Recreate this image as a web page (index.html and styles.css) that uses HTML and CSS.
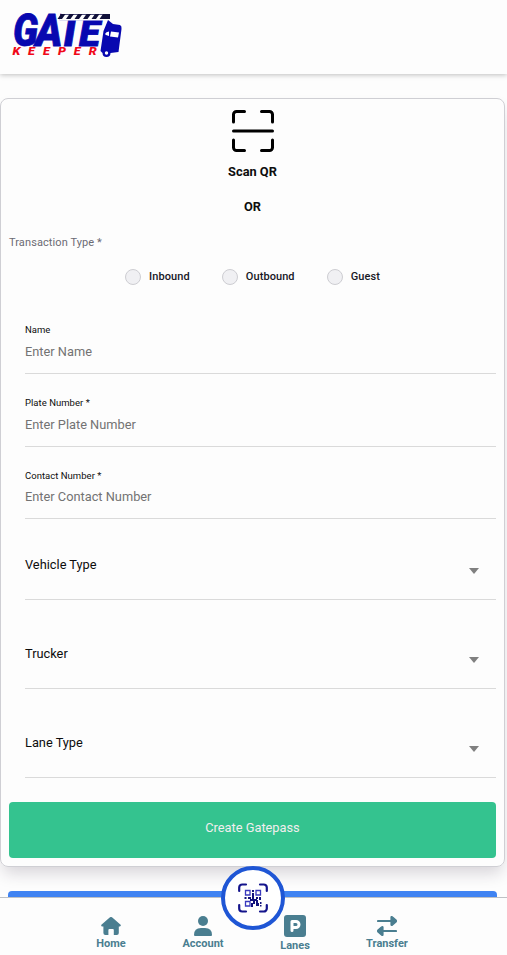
FILE: index.html
```html
<!DOCTYPE html>
<html lang="en">
<head>
<meta charset="utf-8">
<title>Gate Keeper</title>
<link rel="stylesheet" href="styles.css">
</head>
<body>
<header class="header">
  <svg class="logo" width="112" height="48" viewBox="12 11 112 48" role="img" aria-label="Gate Keeper">
    <g class="logo-gate">
      <text x="13" y="46" font-size="45" textLength="25" lengthAdjust="spacingAndGlyphs">G</text>
      <text x="35.500" y="46" font-size="45" textLength="27" lengthAdjust="spacingAndGlyphs">A</text>
      <text x="57" y="46" font-size="45" textLength="26" lengthAdjust="spacingAndGlyphs">T</text>
      <text x="79" y="46" font-size="36" textLength="21" lengthAdjust="spacingAndGlyphs">E</text>
    </g>
    <path fill="#fdfdfd" d="M62 11h50v9.500H59z"/>
    <path fill="#161650" d="M60 14h50v.8H60z"/>
    <path fill="#10103a" d="M61 14h4.500l-3.500 5h-4.500zM69.500 14h4.500l-3.500 5h-4.500zM78 14h4.500l-3.500 5h-4.500zM86.500 14h4.500l-3.500 5h-4.500zM95 14h4.500l-3.500 5h-4.500zM103 14h7v5h-10.500z"/>
    <path fill="#0808b0" d="M108 20l5 4 7 1q2 1 1.500 4l-3 23-8 1a4 4 0 0 1-8 0l-2-2 3-20z"/>
    <path fill="#fff" d="M105 34q1-2.500 4-2.500v4.500l-3-1zM111 31.500l8 1-1 5-8-1z"/>
    <circle cx="106.500" cy="53" r="1.700" fill="#fff"/>
    <g class="logo-keeper" transform="translate(12.500 55) scale(1.200 1)">
      <text x="0 13 25.500 38 51 63.500">KEEPER</text>
    </g>
  </svg>
</header>
<main>
  <section class="card">
    <div class="scan">
      <svg width="42" height="42" viewBox="0 0 42 42" fill="none" stroke="#000" stroke-width="3" stroke-linecap="round" stroke-linejoin="round"><path d="M1.500 12V4.500a3 3 0 0 1 3-3H12.500M29.500 1.500h8a3 3 0 0 1 3 3V12M40.500 30v7.500a3 3 0 0 1-3 3h-8M12.500 40.500h-8a3 3 0 0 1-3-3V30M1.500 21h39"/></svg>
      <strong>Scan QR</strong>
      <strong class="or">OR</strong>
    </div>
    <div class="type-label">Transaction Type *</div>
    <div class="radios">
      <label><input type="radio" name="type">Inbound</label>
      <label><input type="radio" name="type">Outbound</label>
      <label><input type="radio" name="type">Guest</label>
    </div>
    <div class="fields">
      <label class="field"><span>Name</span><input type="text" placeholder="Enter Name"></label>
      <label class="field"><span>Plate Number *</span><input type="text" placeholder="Enter Plate Number"></label>
      <label class="field contact"><span>Contact Number *</span><input type="text" placeholder="Enter Contact Number"></label>
      <div class="select"><span>Vehicle Type</span><i class="arrow"></i></div>
      <div class="select"><span>Trucker</span><i class="arrow"></i></div>
      <div class="select"><span>Lane Type</span><i class="arrow"></i></div>
    </div>
    <button class="create">Create Gatepass</button>
  </section>
  <div class="next-button"></div>
</main>
<nav class="nav">
  <a class="home"><svg width="20" height="18" viewBox="0 0 20 18"><path fill="currentColor" d="M8.700.5a2 2 0 0 1 2.600 0l8.300 7.200q.8 1.500-.8 1.800h-1V16q0 2-2 2h-3v-5q0-1-1-1H8.400q-1 0-1 1v5h-3q-2 0-2-2V9.500h-1Q-.4 9.200.4 7.700z"/></svg>Home</a>
  <a class="account"><svg width="18" height="20" viewBox="0 0 18 20" fill="currentColor"><circle cx="9" cy="5" r="5"/><path d="M0 19q0-7 7-7h4q7 0 7 7 0 1-1 1H1q-1 0-1-1z"/></svg>Account</a>
  <a class="lanes"><svg width="22" height="22" viewBox="0 0 22 22"><rect width="22" height="22" rx="3" fill="currentColor"/><path fill="none" stroke="#fff" stroke-width="3" stroke-linejoin="round" stroke-linecap="round" d="M8 15.500V6.500h4a3 3 0 0 1 0 6H8"/></svg>Lanes</a>
  <a class="transfer"><svg width="20" height="20" viewBox="0 0 20 20"><path fill="none" stroke="currentColor" stroke-width="2.200" stroke-linecap="round" d="M1 5h14M5 15h14"/><path fill="currentColor" stroke="currentColor" stroke-width="1.200" stroke-linejoin="round" d="M14 1q.5-1 1.500 0l3.500 3q1 1 0 2l-3.500 3q-1 1-1.500 0zM6 11q-.5-1-1.500 0L1 14q-1 1 0 2l3.500 3q1 1 1.500 0z"/></svg>Transfer</a>
  <a class="qr" aria-label="Scan"><svg width="30" height="30" viewBox="0 0 30 30"><path fill="none" stroke="#15158c" stroke-width="2.200" stroke-linecap="round" d="M1.200 8V4.500a3 3 0 0 1 3-3H8M22 1.500h3.800a3 3 0 0 1 3 3V8M28.800 22v3.500a3 3 0 0 1-3 3H22M8 28.500H4.200a3 3 0 0 1-3-3V22"/><path fill="none" stroke="#3939bd" stroke-width="1.300" d="M7.500 7.500h4.500v4.500H7.500zM18 7.500h4.500v4.500H18zM7.500 18.500h4.500V23H7.500z"/><path fill="#12127c" d="M14 7h2v2h-2zM14 10h2v3h-2zM6.500 14h2v2h-2zM10 14h3v2h-3zM14 13h2v3h3v2h-2v3h-2v3h-2v-4h2v-2h-3v-2h2zM18 14h2v2h-2zM21 14h2v3h-3v3h-2v-3h3zM18 20h3v3h-3zM22 19h1.500v2H22zM22 22h1.500v1.500H22z"/></svg></a>
</nav>
</body>
</html>
```
FILE: styles.css
```css
* { box-sizing: border-box; }
body {
  margin: 0;
  height: 955px;
  overflow: hidden;
  background: #fdfdfd;
  color: #0d0d0d;
  font: 12.8px/20px Roboto, "Liberation Sans", sans-serif;
}
.header {
  height: 74px;
  padding: 11px 12px;
  box-shadow: 0 1px 5px rgba(0, 0, 0, .25);
}
.logo { display: block; overflow: visible; }
.logo-gate { fill: #0808b0; stroke: #0808b0; stroke-width: .8; font-family: Roboto, sans-serif; font-weight: 900; font-style: italic; }
.logo-keeper { fill: #f00818; font: italic 900 10.5px Roboto, sans-serif; }
main { padding-top: 24px; }
.card {
  width: 505px;
  height: 769px;
  padding: 11px 8px 8px;
  border: 1px solid #cfcfd4;
  border-radius: 8px;
  box-shadow: 0 9px 16px -3px rgba(40, 20, 50, .18);
}
.scan { display: flex; flex-direction: column; align-items: center; }
.scan strong { margin-top: 10px; font-weight: 700; line-height: 20px; }
.scan .or { margin-top: 15px; }
.type-label { margin-top: 15px; color: #6b6b74; font-size: 11px; line-height: 21px; letter-spacing: .1px; }
.radios { display: flex; justify-content: center; gap: 32px; margin-top: 14px; }
.radios label { display: flex; align-items: center; gap: 8px; height: 20px; font-size: 11px; font-weight: 500; color: #171725; letter-spacing: .08px; }
.radios input { appearance: none; width: 16px; height: 16px; margin: 0 0 1px; border: 1px solid #cdcdd2; border-radius: 50%; background: #f0f0f3; }
.fields { padding-left: 16px; margin-top: 36px; }
.field { display: block; height: 51px; margin-bottom: 22px; border-bottom: 1px solid #dadada; }
.field span { display: block; font-size: 9.5px; line-height: 14px; letter-spacing: .03px; }
.field input { display: block; width: 100%; height: 20px; margin: 5px 0 0; padding: 0; border: 0; outline: 0; background: transparent; color: #222; font: 12.8px/20px Roboto, sans-serif; }
.field input::placeholder { color: #737373; opacity: 1; }
.field.contact { height: 50px; margin-bottom: 0; }
.field.contact input { margin-top: 4px; }
.select { display: flex; justify-content: space-between; height: 89px; padding: 44px 17px 0 0; border-bottom: 1px solid #dadada; }
.select:nth-of-type(1) { height: 81px; padding-top: 36px; }
.select span { line-height: 20px; }
.arrow { width: 0; height: 0; margin-top: 13px; border: 5.5px solid transparent; border-top: 6px solid #808080; border-bottom: 0; }
.create { display: block; width: 100%; height: 56px; margin-top: 24px; padding: 0 0 5px; border: 0; border-radius: 4px; background: #34c38f; color: #f2eeee; font: 12.8px/20px Roboto, sans-serif; }
.next-button { width: 489px; height: 40px; margin: 24px 0 0 8px; border-radius: 4px; background: #3f83f2; }
.nav {
  position: fixed;
  left: 0;
  right: 0;
  bottom: 0;
  display: flex;
  height: 58px;
  padding: 0 73px;
  border-top: 1px solid #bec1c5;
  background: #fdfdfd;
  color: #4a7e90;
  font-size: 11px;
  font-weight: 700;
}
.nav a { display: flex; flex-direction: column; align-items: center; line-height: 16px; }
.nav svg { display: block; flex: none; }
.home { width: 76px; padding-top: 19px; }
.home svg, .lanes svg { margin-bottom: 1px; }
.account { width: 108px; padding-top: 18px; }
.lanes { width: 76px; padding-top: 17px; }
.transfer { width: 108px; padding-top: 18px; }
.home, .account, .lanes, .transfer { flex: none; }
.nav .qr { position: absolute; left: 221px; top: -32px; width: 64px; height: 64px; justify-content: center; border: 4px solid #1f56d5; border-radius: 50%; background: #fff; }
```
